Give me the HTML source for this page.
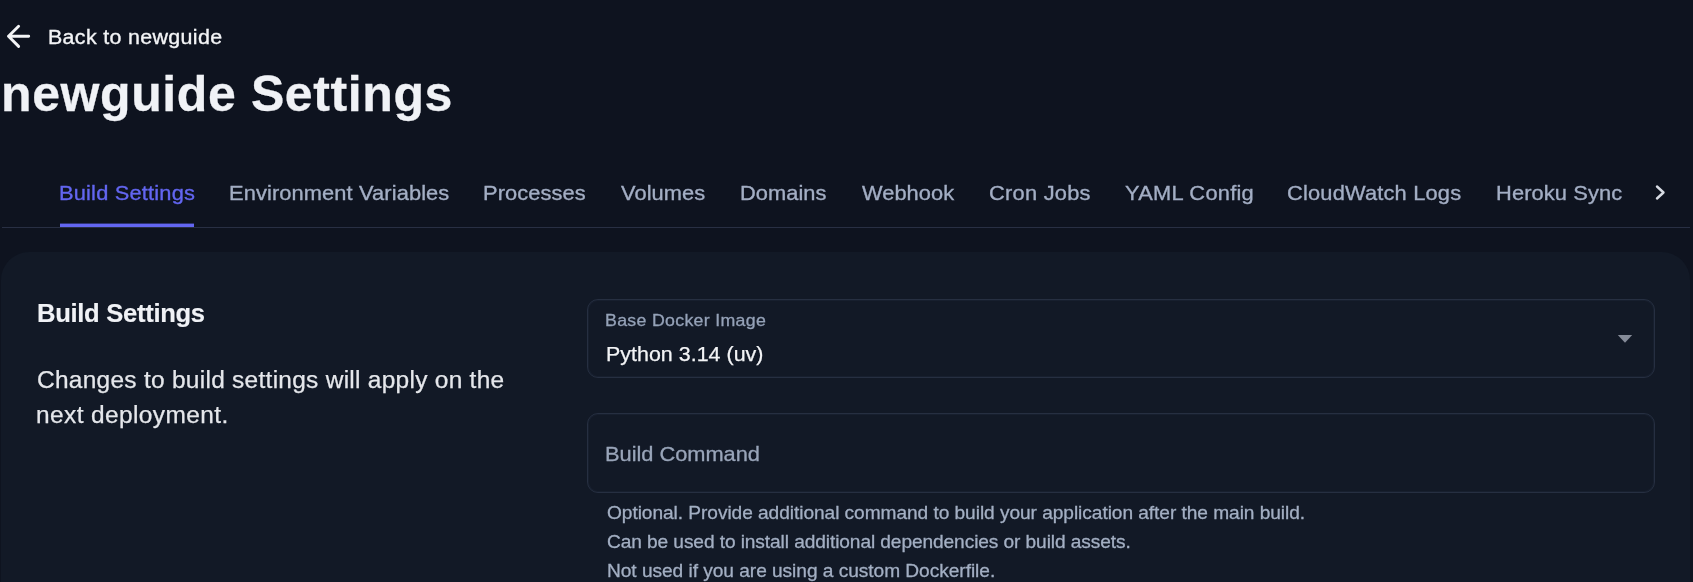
<!DOCTYPE html>
<html lang="en">
<head>
<meta charset="utf-8">
<title>newguide Settings</title>
<style>
  html, body { margin: 0; padding: 0; }
  html { width: 1693px; height: 582px; overflow: hidden; background: #0e131f; }
  body {
    width: 1693px; height: 582px; overflow: hidden; position: relative;
    background: #0e131f;
    font-family: "Liberation Sans", sans-serif;
    color: #f3f4f6;
  }
  .abs { position: absolute; white-space: nowrap; line-height: 1; will-change: transform; transform-origin: 0 0; }
  .back { color: #f3f4f6; -webkit-text-stroke: 0.35px currentColor; }
  .title { font-weight: bold; color: #f0f2f6; -webkit-text-stroke: 0.3px currentColor; }
  .tab { color: #a3aec4; -webkit-text-stroke: 0.35px currentColor; }
  .tab.active { color: #6366f1; }
  .tabline { position: absolute; left: 2px; top: 227px; width: 1688px; height: 1px; background: #282f43; }
  .tabul { position: absolute; left: 60px; top: 223px; width: 134px; height: 4px; background: linear-gradient(to bottom, rgba(99,102,241,0.4) 0, rgba(99,102,241,0.4) 1px, #6366f1 1px, #6366f1 100%); }
  .card { position: absolute; left: 1px; top: 252px; width: 1689px; height: 330px; background: #121926; border-radius: 28px 28px 0 0; }
  .h2 { font-weight: bold; color: #f0f2f6; -webkit-text-stroke: 0.15px currentColor; }
  .desc { color: #e5e7eb; -webkit-text-stroke: 0.25px currentColor; }
  .field { position: absolute; left: 587px; width: 1066px; height: 77px; border: 1px solid #262f41; border-radius: 11px; box-sizing: content-box; box-shadow: inset 0 0 0 1px rgba(38,47,65,0.3); }
  .lbl { color: #95a2b8; -webkit-text-stroke: 0.3px currentColor; }
  .val { color: #f3f4f6; -webkit-text-stroke: 0.25px currentColor; }
  .bc { color: #99a5b9; -webkit-text-stroke: 0.3px currentColor; }
  .help { color: #a3afc3; -webkit-text-stroke: 0.3px currentColor; }
</style>
</head>
<body>
  <svg class="abs" style="left:4px;top:22px" width="30" height="30" viewBox="0 0 30 30" fill="none" stroke="#f3f4f6" stroke-width="2.9" stroke-linecap="round" stroke-linejoin="round">
    <path d="M24.7 14.3H4.5M14.6 4.2L4.5 14.3L14.6 24.4"/>
  </svg>
  <div id="back" class="abs back" style="left:48.07px;top:27.00px;font-size:20.0px;letter-spacing:0.320px;transform:scaleX(1.07);">Back to newguide</div>
  <div id="title" class="abs title" style="left:1.17px;top:69.00px;font-size:50.0px;letter-spacing:0.605px;">newguide Settings</div>
  <div id="t0" class="abs tab active" style="left:59.21px;top:183.00px;font-size:20.8px;letter-spacing:0.173px;transform:scaleX(1.05);">Build Settings</div>
  <div id="t1" class="abs tab" style="left:228.61px;top:183.00px;font-size:20.8px;letter-spacing:0.105px;transform:scaleX(1.05);">Environment Variables</div>
  <div id="t2" class="abs tab" style="left:483.31px;top:183.00px;font-size:20.8px;letter-spacing:0.088px;transform:scaleX(1.05);">Processes</div>
  <div id="t3" class="abs tab" style="left:621.26px;top:183.00px;font-size:20.8px;letter-spacing:0.060px;transform:scaleX(1.05);">Volumes</div>
  <div id="t4" class="abs tab" style="left:739.96px;top:183.00px;font-size:20.8px;letter-spacing:0.052px;transform:scaleX(1.05);">Domains</div>
  <div id="t5" class="abs tab" style="left:862.16px;top:183.00px;font-size:20.8px;letter-spacing:0.031px;transform:scaleX(1.05);">Webhook</div>
  <div id="t6" class="abs tab" style="left:988.65px;top:183.00px;font-size:20.8px;letter-spacing:0.240px;transform:scaleX(1.05);">Cron Jobs</div>
  <div id="t7" class="abs tab" style="left:1125.28px;top:183.00px;font-size:20.8px;letter-spacing:0.239px;transform:scaleX(1.05);">YAML Config</div>
  <div id="t8" class="abs tab" style="left:1287.25px;top:183.00px;font-size:20.8px;letter-spacing:0.173px;transform:scaleX(1.05);">CloudWatch Logs</div>
  <div id="t9" class="abs tab" style="left:1495.76px;top:183.00px;font-size:20.8px;letter-spacing:0.115px;transform:scaleX(1.05);">Heroku Sync</div>
  <svg class="abs" style="left:1650px;top:181.5px" width="20" height="20" viewBox="0 0 20 20" fill="none" stroke="#d8dce4" stroke-width="2.4" stroke-linecap="round" stroke-linejoin="round">
    <path d="M7 4.5L13.5 10.5L7 16.5"/>
  </svg>
  <div class="tabline"></div>
  <div class="tabul"></div>

  <div class="card"></div>
  <div id="h2" class="abs h2" style="left:36.74px;top:301.10px;font-size:25.6px;letter-spacing:-0.304px;">Build Settings</div>
  <div id="d1" class="abs desc" style="left:36.62px;top:369.10px;font-size:23.1px;letter-spacing:0.254px;transform:scaleX(1.06);">Changes to build settings will apply on the</div>
  <div id="d2" class="abs desc" style="left:36.48px;top:403.80px;font-size:23.1px;letter-spacing:0.364px;transform:scaleX(1.06);">next deployment.</div>

  <div class="field" style="top:299px"></div>
  <div id="lbl" class="abs lbl" style="left:604.67px;top:313.00px;font-size:16.6px;letter-spacing:0.287px;transform:scaleX(1.07);">Base Docker Image</div>
  <div id="val" class="abs val" style="left:605.84px;top:344.00px;font-size:20.2px;letter-spacing:0.028px;transform:scaleX(1.06);">Python 3.14 (uv)</div>
  <svg class="abs" style="left:1617px;top:335px" width="16" height="9" viewBox="0 0 16 9"><path d="M0.8 0H15.2L8 7.8Z" fill="#858b98"/></svg>

  <div class="field" style="top:413px;height:78px"></div>
  <div id="bc" class="abs bc" style="left:604.71px;top:444.00px;font-size:20.8px;letter-spacing:-0.031px;transform:scaleX(1.05);">Build Command</div>
  <div id="h1" class="abs help" style="left:607.36px;top:504.10px;font-size:18.4px;letter-spacing:-0.054px;transform:scaleX(1.04);">Optional. Provide additional command to build your application after the main build.</div>
  <div id="h2b" class="abs help" style="left:607.42px;top:533.00px;font-size:18.4px;letter-spacing:-0.089px;transform:scaleX(1.04);">Can be used to install additional dependencies or build assets.</div>
  <div id="h3" class="abs help" style="left:606.59px;top:562.00px;font-size:18.4px;letter-spacing:-0.041px;transform:scaleX(1.04);">Not used if you are using a custom Dockerfile.</div>
</body>
</html>
